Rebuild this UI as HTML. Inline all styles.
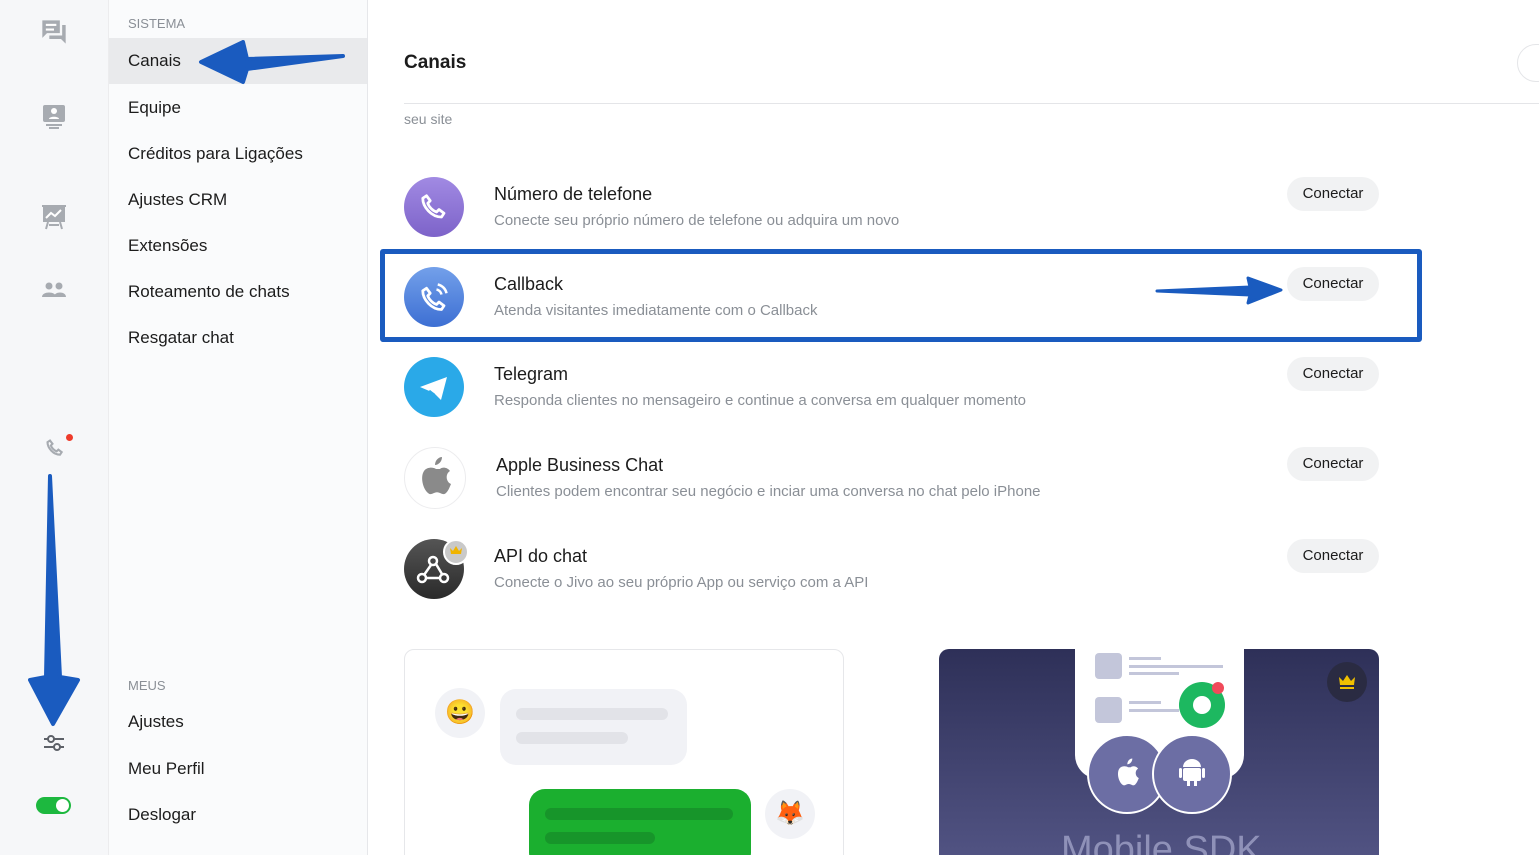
<!DOCTYPE html>
<html><head><meta charset="utf-8"><style>
*{margin:0;padding:0;box-sizing:border-box}
html{width:1539px;height:855px;overflow:hidden}
body{width:1539px;height:855px;overflow:hidden;background:#fff;font-family:"Liberation Sans",sans-serif;position:relative;color:#1c1c1c}
.rail{position:absolute;left:0;top:0;width:109px;height:855px;background:#f6f7f9;border-right:1px solid #ececee}
.side{position:absolute;left:109px;top:0;width:259px;height:855px;background:#fafbfc;border-right:1px solid #e6e7ea}
.sec{position:absolute;left:19px;font-size:13px;color:#8a8f96}
.item{position:absolute;left:0;width:258px;height:46px;padding-left:19px;line-height:46px;font-size:17px;color:#1c1c1c}
.sel{background:#e9eaec}
.abs{position:absolute}
.title{left:404px;top:52px;font-size:19px;font-weight:bold;color:#1c1c1c}
.hr{left:404px;top:103px;width:1135px;height:1px;background:#e4e5e8}
.nm{position:absolute;font-size:18px;color:#1c1c1c}
.ds{position:absolute;font-size:15px;color:#8a8f96}
.btn{position:absolute;left:1287px;width:92px;height:34px;border-radius:17px;background:#f1f2f3;font-size:15px;text-align:center;line-height:34px;color:#1c1c1c}
</style></head><body>
<div class="rail">
<svg class="abs" style="left:40px;top:18px" width="28" height="28" viewBox="0 0 24 24"><path d="M2 2h15v11H6l-4 4z" fill="#a7abb1"/><path d="M19 6h3v16l-4-4H8v-3h11z" fill="#a7abb1"/><rect x="5" y="5" width="9" height="1.8" fill="#fff"/><rect x="5" y="9" width="7" height="1.8" fill="#fff"/></svg>
<svg class="abs" style="left:42px;top:104px" width="24" height="26" viewBox="0 0 24 26"><rect x="1" y="1" width="22" height="17" rx="2" fill="#a7abb1"/><circle cx="12" cy="7" r="3" fill="#fff"/><path d="M7 15c0-3 10-3 10 0z" fill="#fff"/><rect x="4" y="20" width="16" height="2" fill="#a7abb1"/><rect x="7" y="23" width="10" height="2" fill="#a7abb1"/></svg>
<svg class="abs" style="left:41px;top:204px" width="26" height="26" viewBox="0 0 26 26"><rect x="1" y="1" width="24" height="2" fill="#a7abb1"/><rect x="2" y="3" width="22" height="15" fill="#a7abb1"/><path d="M5 14l5-5 4 3 6-6" stroke="#fff" stroke-width="2" fill="none"/><path d="M7 18l-2 7M19 18l2 7M8 21h10" stroke="#a7abb1" stroke-width="2"/></svg>
<svg class="abs" style="left:42px;top:282px" width="24" height="16" viewBox="0 0 24 16"><circle cx="7" cy="4" r="3.5" fill="#a7abb1"/><circle cx="17" cy="4" r="3.5" fill="#a7abb1"/><path d="M0 15c0-6 14-6 14 0zM12 15c0-6 12-6 12 0z" fill="#a7abb1"/></svg>
<svg class="abs" style="left:45px;top:438px" width="20" height="20" viewBox="0 0 24 24"><path d="M6 3l3 4-2 2c1 3 4 6 7 7l2-2 4 3-2 3C10 20 3 12 3 5z" fill="none" stroke="#a7abb1" stroke-width="2.5"/></svg>
<div class="abs" style="left:66px;top:434px;width:7px;height:7px;border-radius:50%;background:#ee3b2b"></div>
<svg class="abs" style="left:43px;top:733px" width="22" height="20" viewBox="0 0 22 20"><path d="M1 6h20M1 14h20" stroke="#5d6168" stroke-width="2"/><circle cx="8" cy="6" r="3" fill="#f6f7f9" stroke="#5d6168" stroke-width="2"/><circle cx="14" cy="14" r="3" fill="#f6f7f9" stroke="#5d6168" stroke-width="2"/></svg>
<div class="abs" style="left:36px;top:797px;width:35px;height:17px;border-radius:9px;background:#1db83f"><div style="position:absolute;right:2px;top:2px;width:13px;height:13px;border-radius:50%;background:#fff"></div></div>
</div>
<div class="side">
<div class="sec" style="top:16px">SISTEMA</div>
<div class="item sel" style="top:38px">Canais</div>
<div class="item" style="top:85px">Equipe</div>
<div class="item" style="top:131px">Créditos para Ligações</div>
<div class="item" style="top:177px">Ajustes CRM</div>
<div class="item" style="top:223px">Extensões</div>
<div class="item" style="top:269px">Roteamento de chats</div>
<div class="item" style="top:315px">Resgatar chat</div>
<div class="sec" style="top:678px">MEUS</div>
<div class="item" style="top:699px">Ajustes</div>
<div class="item" style="top:746px">Meu Perfil</div>
<div class="item" style="top:792px">Deslogar</div>
</div>
<div class="abs title">Canais</div>
<div class="abs" style="left:1517px;top:44px;width:40px;height:38px;border:1px solid #e4e5e8;border-radius:19px"></div>
<div class="abs hr"></div>
<div class="abs" style="left:404px;top:111px;font-size:14px;color:#8a8f96">seu site</div>

<div class="abs" style="left:380px;top:249px;width:1042px;height:93px;border:5px solid #1a5bbf;border-radius:3px"></div>

<div class="abs" style="left:404px;top:177px;width:60px;height:60px;border-radius:50%;background:linear-gradient(#a18ae3,#7d63c9)"></div>
<svg class="abs" style="left:419px;top:192px" width="30" height="30" viewBox="0 0 24 24"><path d="M6 3l3 4-2 2c1 3 4 6 7 7l2-2 4 3-2 3C10 20 3 12 3 5z" fill="none" stroke="#fff" stroke-width="2.2" stroke-linejoin="round"/></svg>
<div class="nm" style="left:494px;top:184px">Número de telefone</div>
<div class="ds" style="left:494px;top:212px">Conecte seu próprio número de telefone ou adquira um novo</div>
<div class="btn" style="top:177px">Conectar</div>

<div class="abs" style="left:404px;top:267px;width:60px;height:60px;border-radius:50%;background:linear-gradient(#73a0ea,#3d6fd3)"></div>
<svg class="abs" style="left:419px;top:282px" width="30" height="30" viewBox="0 0 24 24"><path d="M6 5l3 4-2 2c1 3 4 6 7 7l2-2 4 3-2 3C10 22 3 14 3 7z" fill="none" stroke="#fff" stroke-width="2.2" stroke-linejoin="round"/><path d="M14 6a5 5 0 0 1 4 4M15 2a9 9 0 0 1 7 7" stroke="#fff" stroke-width="2" fill="none"/></svg>
<div class="nm" style="left:494px;top:274px">Callback</div>
<div class="ds" style="left:494px;top:302px">Atenda visitantes imediatamente com o Callback</div>
<div class="btn" style="top:267px">Conectar</div>
<svg class="abs" style="left:1155px;top:270px" width="130" height="40" viewBox="0 0 130 40"><path d="M2 21L95 17L93 8L126 20L93 33L95 25Z" fill="#1a5bbf" stroke="#1a5bbf" stroke-width="3" stroke-linejoin="round"/></svg>

<div class="abs" style="left:404px;top:357px;width:60px;height:60px;border-radius:50%;background:#2aa9e8"></div>
<svg class="abs" style="left:414px;top:369px" width="40" height="36" viewBox="0 0 40 36"><path d="M6 18L33 8L27 31L20 24Z" fill="#fff"/><path d="M15 22l5 4" stroke="#2aa9e8" stroke-width="3"/></svg>
<div class="nm" style="left:494px;top:364px">Telegram</div>
<div class="ds" style="left:494px;top:392px">Responda clientes no mensageiro e continue a conversa em qualquer momento</div>
<div class="btn" style="top:357px">Conectar</div>

<div class="abs" style="left:404px;top:447px;width:62px;height:62px;border-radius:50%;background:#fff;border:1px solid #ececee"></div>
<svg class="abs" style="left:418px;top:455px" width="36" height="44" viewBox="0 0 36 44"><path d="M24 2c0 5-4 8-7 8 0-5 4-8 7-8z" fill="#8a8a8a"/><path d="M18 14c-3-2-9-2-12 2-4 6-1 18 4 22 2 2 4 1 6 0s4-1 6 0 4 2 6 0c3-3 4-7 5-9-5-2-6-10-1-13-3-4-8-4-10-2z" fill="#8a8a8a"/></svg>
<div class="nm" style="left:496px;top:455px">Apple Business Chat</div>
<div class="ds" style="left:496px;top:483px">Clientes podem encontrar seu negócio e inciar uma conversa no chat pelo iPhone</div>
<div class="btn" style="top:447px">Conectar</div>

<div class="abs" style="left:404px;top:539px;width:60px;height:60px;border-radius:50%;background:linear-gradient(#555,#2a2a2a)"></div>
<svg class="abs" style="left:414px;top:552px" width="38" height="34" viewBox="0 0 38 34"><g fill="none" stroke="#fff" stroke-width="2.5"><circle cx="19" cy="9" r="4"/><circle cx="8" cy="26" r="4"/><circle cx="30" cy="26" r="4"/><path d="M17 13l-7 10M12 26h14M22 12l6 10"/></g></svg>
<div class="abs" style="left:443px;top:539px;width:26px;height:26px;border-radius:50%;background:#c9c9c9;border:2px solid #fff"></div>
<svg class="abs" style="left:449px;top:545px" width="14" height="12" viewBox="0 0 14 12"><path d="M1 3l3 3 3-5 3 5 3-3-1 6H2z" fill="#f0b400"/></svg>
<div class="nm" style="left:494px;top:546px">API do chat</div>
<div class="ds" style="left:494px;top:574px">Conecte o Jivo ao seu próprio App ou serviço com a API</div>
<div class="btn" style="top:539px">Conectar</div>

<div class="abs" style="left:404px;top:649px;width:440px;height:220px;border:1px solid #e6e7ea;border-radius:10px;background:#fff"></div>
<div class="abs" style="left:435px;top:688px;width:50px;height:50px;border-radius:50%;background:#f1f2f6;text-align:center;line-height:50px;font-size:24px">😀</div>
<div class="abs" style="left:500px;top:689px;width:187px;height:76px;border-radius:16px;background:#f1f2f6"></div>
<div class="abs" style="left:516px;top:708px;width:152px;height:12px;border-radius:6px;background:#e2e3e8"></div>
<div class="abs" style="left:516px;top:732px;width:112px;height:12px;border-radius:6px;background:#e2e3e8"></div>
<div class="abs" style="left:529px;top:789px;width:222px;height:80px;border-radius:16px;background:#1baf2f"></div>
<div class="abs" style="left:545px;top:808px;width:188px;height:12px;border-radius:6px;background:#17952a"></div>
<div class="abs" style="left:545px;top:832px;width:110px;height:12px;border-radius:6px;background:#17952a"></div>
<div class="abs" style="left:765px;top:789px;width:50px;height:50px;border-radius:50%;background:#f1f2f6;text-align:center;line-height:50px;font-size:24px">🦊</div>

<div class="abs" style="left:939px;top:649px;width:440px;height:220px;border-radius:10px;background:linear-gradient(#2e3058,#535585);overflow:hidden">
<div class="abs" style="left:136px;top:-10px;width:169px;height:140px;border-radius:0 0 24px 24px;background:#fff"></div>
<div class="abs" style="left:156px;top:4px;width:27px;height:26px;border-radius:4px;background:#c3c6da"></div>
<div class="abs" style="left:190px;top:8px;width:32px;height:3px;background:#c3c6da"></div>
<div class="abs" style="left:190px;top:16px;width:94px;height:3px;background:#c3c6da"></div>
<div class="abs" style="left:190px;top:23px;width:50px;height:3px;background:#c3c6da"></div>
<div class="abs" style="left:156px;top:48px;width:27px;height:26px;border-radius:4px;background:#c3c6da"></div>
<div class="abs" style="left:190px;top:52px;width:32px;height:3px;background:#c3c6da"></div>
<div class="abs" style="left:190px;top:60px;width:50px;height:3px;background:#c3c6da"></div>
<div class="abs" style="left:240px;top:33px;width:46px;height:46px;border-radius:50%;background:#1db860"></div>
<div class="abs" style="left:254px;top:47px;width:18px;height:18px;border-radius:50%;background:#fff"></div>
<div class="abs" style="left:273px;top:33px;width:12px;height:12px;border-radius:50%;background:#f04a5a"></div>
<div class="abs" style="left:148px;top:85px;width:80px;height:80px;border-radius:50%;background:#6c6ea4;border:2px solid #fff"></div>
<div class="abs" style="left:213px;top:85px;width:80px;height:80px;border-radius:50%;background:#6c6ea4;border:2px solid #fff"></div>
<svg class="abs" style="left:176px;top:108px" width="26" height="32" viewBox="0 0 36 44"><path d="M24 2c0 5-4 8-7 8 0-5 4-8 7-8z" fill="#fff"/><path d="M18 14c-3-2-9-2-12 2-4 6-1 18 4 22 2 2 4 1 6 0s4-1 6 0 4 2 6 0c3-3 4-7 5-9-5-2-6-10-1-13-3-4-8-4-10-2z" fill="#fff"/></svg>
<svg class="abs" style="left:240px;top:108px" width="26" height="30" viewBox="0 0 26 30"><path d="M4 10a9 8 0 0 1 18 0z" fill="#fff"/><rect x="4" y="11" width="18" height="13" rx="2" fill="#fff"/><rect x="0" y="11" width="3" height="10" rx="1.5" fill="#fff"/><rect x="23" y="11" width="3" height="10" rx="1.5" fill="#fff"/><rect x="8" y="23" width="3" height="6" fill="#fff"/><rect x="15" y="23" width="3" height="6" fill="#fff"/></svg>
<div class="abs" style="left:388px;top:13px;width:40px;height:40px;border-radius:50%;background:#2a2b42"></div>
<svg class="abs" style="left:399px;top:25px" width="18" height="16" viewBox="0 0 18 16"><path d="M1 3l4 4 4-6 4 6 4-4-1 8H2z" fill="#f0c000"/><rect x="2" y="13" width="14" height="2" fill="#f0c000"/></svg>
<div class="abs" style="left:122px;top:180px;font-size:38px;color:#8f91b8">Mobile SDK</div>
</div>

<svg class="abs" style="left:195px;top:34px" width="152" height="54" viewBox="0 0 152 54"><path d="M148 22L52 25L48 8L6 28L48 48L52 35Z" fill="#1a5bbf" stroke="#1a5bbf" stroke-width="4" stroke-linejoin="round"/></svg>
<svg class="abs" style="left:26px;top:472px" width="56" height="256" viewBox="0 0 56 256"><path d="M24 4L20 205L4 208L27 252L52 208L34 205Z" fill="#1a5bbf" stroke="#1a5bbf" stroke-width="4" stroke-linejoin="round"/></svg>
</body></html>
